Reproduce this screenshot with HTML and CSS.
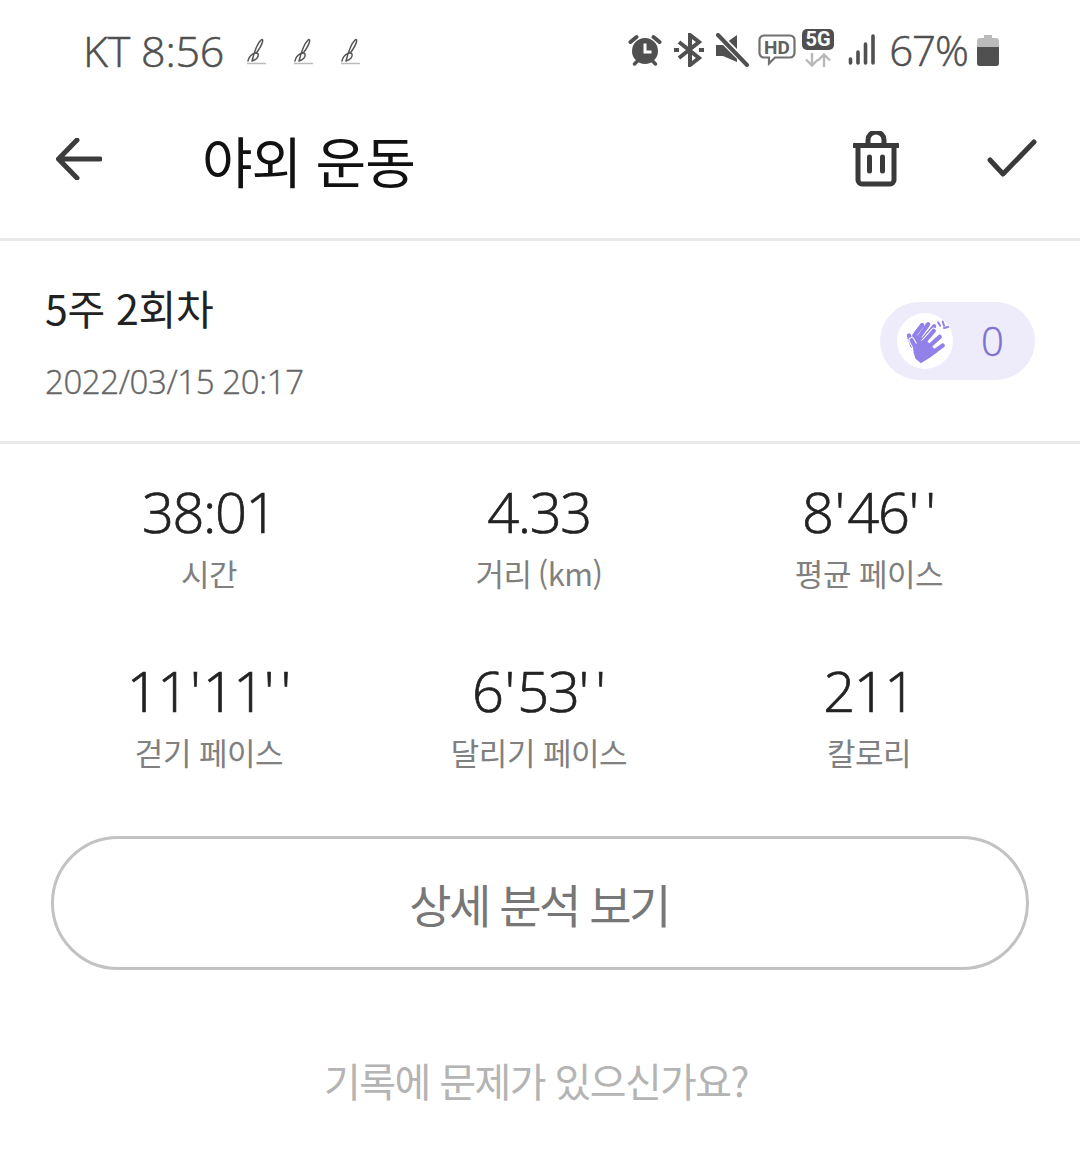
FILE: index.html
```html
<!DOCTYPE html>
<html lang="ko">
<head>
<meta charset="utf-8">
<title>야외 운동</title>
<link rel="stylesheet" href="styles.css">
</head>
<body>
<div class="status">
  <div class="status-left">
    <span class="status-text">KT 8:56</span>
    <svg class="pen" viewBox="0 0 20 30"><path d="M1 26c1-6 8-10 10-7 1 3-2 6-6 7M5 26c2-8 6-18 9-21 3-2 2 4-4 12" fill="none" stroke="#555" stroke-width="1.500" stroke-linecap="round"/><path d="M0 28.500h19" stroke="#bbb" stroke-width="1.500"/></svg>
    <svg class="pen" viewBox="0 0 20 30"><path d="M1 26c1-6 8-10 10-7 1 3-2 6-6 7M5 26c2-8 6-18 9-21 3-2 2 4-4 12" fill="none" stroke="#555" stroke-width="1.500" stroke-linecap="round"/><path d="M0 28.500h19" stroke="#bbb" stroke-width="1.500"/></svg>
    <svg class="pen" viewBox="0 0 20 30"><path d="M1 26c1-6 8-10 10-7 1 3-2 6-6 7M5 26c2-8 6-18 9-21 3-2 2 4-4 12" fill="none" stroke="#555" stroke-width="1.500" stroke-linecap="round"/><path d="M0 28.500h19" stroke="#bbb" stroke-width="1.500"/></svg>
  </div>
  <div class="status-right">
    <svg class="ic-alarm" viewBox="0 0 34 34"><circle cx="17" cy="18" r="13" fill="#505050"/><path d="M2.500 9l6-5M31.500 9l-6-5" stroke="#505050" stroke-width="4" stroke-linecap="round"/><path d="M6.500 31l3-3M27.500 31l-3-3" stroke="#505050" stroke-width="3.500" stroke-linecap="round"/><path d="M17 10.500v8.500h6.500" fill="none" stroke="#fff" stroke-width="3"/></svg>
    <svg class="ic-bt" viewBox="0 0 30 34"><path d="M5 9l20 16-9 7V2l9 7L5 25" fill="none" stroke="#505050" stroke-width="4"/><path d="M0 17h5M25 17h5" stroke="#505050" stroke-width="4"/></svg>
    <svg class="ic-mute" viewBox="0 0 34 34"><path d="M1 12h7L22 2v27L8 23H1z" fill="#505050"/><path d="M2 1l31 31" stroke="#fff" stroke-width="7"/><path d="M3 2l29 30" stroke="#505050" stroke-width="4" stroke-linecap="round"/></svg>
    <svg class="ic-hd" viewBox="0 0 38 32"><path d="M6 1.500h26a4.500 4.500 0 0 1 4.500 4.500v13a4.500 4.500 0 0 1-4.500 4.500H17l-6 6v-6H6A4.500 4.500 0 0 1 1.500 19V6A4.500 4.500 0 0 1 6 1.500z" fill="none" stroke="#707070" stroke-width="2.200"/><text x="19" y="19.500" class="hd-text">HD</text></svg>
    <div class="fiveg">
      <span class="fiveg-badge">5G</span>
      <svg class="ic-arrows" viewBox="0 0 30 14"><path d="M9 0v12M3 6.500l6 6 6-6M21 14V2M15 7.500l6-6 6 6" fill="none" stroke="#b8b8b8" stroke-width="2.400"/></svg>
    </div>
    <svg class="ic-signal" viewBox="0 0 28 32"><path d="M2.500 25v4M10 18v11M17.500 10v19M25 2v27" stroke="#505050" stroke-width="3.600" stroke-linecap="round"/></svg>
    <span class="status-pct">67%</span>
    <div class="battery"><span class="battery-cap"></span><span class="battery-body"><span class="battery-fill"></span></span></div>
  </div>
</div>

<header class="appbar">
  <svg class="ic-back" viewBox="0 0 46 42"><path d="M44 21H3M21 2L2.500 21 21 40" fill="none" stroke="#3c3c3c" stroke-width="5" stroke-linecap="round" stroke-linejoin="round"/></svg>
  <h1 class="title">야외 운동</h1>
  <svg class="ic-trash" viewBox="0 0 46 56"><path d="M1.500 14.500h43M15 14V9a8 8 0 0 1 16 0v5M5 15v34a4 4 0 0 0 4 4h28a4 4 0 0 0 4-4V15M16.500 26v14M29.500 26v14" fill="none" stroke="#3a3a3a" stroke-width="5" stroke-linecap="round"/></svg>
  <svg class="ic-check" viewBox="0 0 50 40"><path d="M3 21l13 14L47 3" fill="none" stroke="#3a3a3a" stroke-width="5" stroke-linecap="round" stroke-linejoin="round"/></svg>
</header>

<section class="info">
  <div class="info-text">
    <div class="info-name">5주 2회차</div>
    <div class="info-date">2022/03/15 20:17</div>
  </div>
  <div class="clap">
    <span class="clap-circle">
      <svg class="ic-clap" viewBox="30 20 140 145">
        <g fill="none" stroke="#9181e8" stroke-width="13" stroke-linecap="round">
          <path d="M50 76l10 30M66 76l24-32M78 84l30-42M90 92l36-44"/>
        </g>
        <path d="M45 85l30-10 30 15-20 40-20-15z" fill="#9181e8"/>
        <g fill="none" stroke="#fff" stroke-width="19" stroke-linecap="round">
          <path d="M72 116l-14-26M90 102l35-40M105 114l38-34M118 130l34-24"/>
        </g>
        <g fill="none" stroke="#9181e8" stroke-width="13" stroke-linecap="round">
          <path d="M72 116l-14-26M90 102l35-40M105 114l38-34M118 130l34-24"/>
        </g>
        <path d="M62 106l36-20 38 40-22 16-28 18-16-14-6-18z" fill="#9181e8"/>
        <path d="M138 36l6 10M152 34l4 12M168 50l-12 3" fill="none" stroke="#9181e8" stroke-width="6" stroke-linecap="round"/>
      </svg>
    </span>
    <span class="clap-count">0</span>
  </div>
</section>

<section class="stats">
  <div class="stat"><div class="stat-value">38:01</div><div class="stat-label">시간</div></div>
  <div class="stat"><div class="stat-value">4.33</div><div class="stat-label label-km">거리 (km)</div></div>
  <div class="stat"><div class="stat-value">8<span class="prime">'</span>46<span class="primes">''</span></div><div class="stat-label">평균 페이스</div></div>
  <div class="stat"><div class="stat-value">11<span class="prime">'</span>11<span class="primes">''</span></div><div class="stat-label">걷기 페이스</div></div>
  <div class="stat"><div class="stat-value">6<span class="prime">'</span>53<span class="primes">''</span></div><div class="stat-label">달리기 페이스</div></div>
  <div class="stat"><div class="stat-value">211</div><div class="stat-label">칼로리</div></div>
</section>

<div class="action"><button class="detail-btn" type="button">상세 분석 보기</button></div>
<a class="report">기록에 문제가 있으신가요?</a>
</body>
</html>
```

FILE: styles.css
```css
* { box-sizing: border-box; }
html, body { margin: 0; padding: 0; background: #fff; }
body { width: 1080px; height: 1160px; overflow: hidden; font-family: "Noto Sans CJK KR", "Noto Sans", sans-serif; }
.status { height: 100px; display: flex; justify-content: space-between; align-items: center; padding: 0 81px 0 83px; }
.status-left { display: flex; align-items: center; gap: 27px; }
.status-text { font: 300 43px/1 "Open Sans", sans-serif; color: #505050; margin-right: -4px; letter-spacing: -0.200px; -webkit-text-stroke: 0.500px #505050; }
.pen { width: 20px; height: 30px; }
.status-right { display: flex; align-items: center; }
.ic-alarm { width: 34px; height: 34px; }
.ic-bt { width: 30px; height: 34px; margin-left: 12px; }
.ic-mute { width: 34px; height: 34px; margin-left: 11px; }
.ic-hd { width: 38px; height: 32px; margin-left: 9px; }
.hd-text { font: 700 19px Roboto, sans-serif; fill: #606060; text-anchor: middle; }
.fiveg { display: flex; flex-direction: column; align-items: center; width: 32px; margin: -4px 0 0 6px; }
.fiveg-badge { width: 32px; height: 21px; background: #505050; color: #fff; border-radius: 5px; font: 700 20px/21px Roboto, sans-serif; text-align: center; }
.ic-arrows { width: 30px; height: 14px; margin-top: 3px; }
.ic-signal { width: 28px; height: 32px; margin-left: 14px; }
.status-pct { font: 300 42px/1 "Open Sans", sans-serif; color: #505050; margin-left: 13px; margin-right: 9px; letter-spacing: -1px; -webkit-text-stroke: 0.500px #505050; }
.battery { width: 22px; display: flex; flex-direction: column; align-items: center; }
.battery-cap { width: 8px; height: 3px; background: #bbb; }
.battery-body { width: 22px; height: 28px; background: #bbb; border-radius: 3px; display: flex; align-items: flex-end; overflow: hidden; }
.battery-fill { width: 100%; height: 19px; background: #505050; }

.appbar { height: 141px; display: flex; align-items: center; padding: 0 43px 20px 56px; border-bottom: 3px solid #e9e9e9; }
.ic-back { width: 46px; height: 42px; }
.title { margin: 0 0 0 100px; font-size: 55px; font-weight: 400; line-height: 1; color: #111; letter-spacing: -1px; flex: 1; }
.ic-trash { width: 46px; height: 56px; margin-right: 88px; }
.ic-check { width: 50px; height: 40px; }

.info { height: 203px; display: flex; justify-content: space-between; align-items: center; padding: 0 45px; border-bottom: 3px solid #e9e9e9; }
.info-text { padding-top: 1px; }
.info-name { font-size: 41px; line-height: 50px; color: #222; letter-spacing: -0.300px; }
.info-date { font: 300 33px/40px "Open Sans", sans-serif; color: #666; margin-top: 30px; letter-spacing: -0.400px; -webkit-text-stroke: 0.400px #666; }
.clap { width: 155px; height: 78px; border-radius: 39px; background: #eeebfb; display: flex; align-items: center; padding-left: 17px; gap: 28px; }
.clap-circle { width: 56px; height: 56px; border-radius: 50%; background: #fff; display: flex; align-items: center; justify-content: center; }
.ic-clap { width: 47px; height: 48px; }
.clap-count { font: 300 40px/1 "Open Sans", sans-serif; color: #7f70cf; -webkit-text-stroke: 0.400px #7f70cf; }

.stats { display: grid; grid-template-columns: repeat(3, 330px); justify-content: center; grid-auto-rows: 179px; padding: 34px 2px 0 0; }
.stat { display: flex; flex-direction: column; align-items: center; }
.stat-value { font: 300 56px/66px "Open Sans", sans-serif; color: #222; letter-spacing: -1.400px; -webkit-text-stroke: 0.700px #222; }
.prime { letter-spacing: 0; margin: 0 2px; }
.primes { letter-spacing: 6px; margin-right: -6px; }
.stat-label { font-size: 31px; line-height: 44px; color: #808080; letter-spacing: -0.500px; margin-top: 7px; }
.label-km { word-spacing: -2px; }

.action { padding: 0 51px; }
.detail-btn { width: 100%; height: 134px; border: 3px solid #c2c2c2; border-radius: 67px; background: #fff; color: #777; font: 400 46px/1 "Noto Sans CJK KR", sans-serif; letter-spacing: -2.500px; padding: 0 2px 0 0; }
.report { display: block; margin-top: 85px; padding-right: 8px; text-align: center; font-size: 40px; line-height: 50px; color: #b4b4b4; letter-spacing: -1.600px; }
```
